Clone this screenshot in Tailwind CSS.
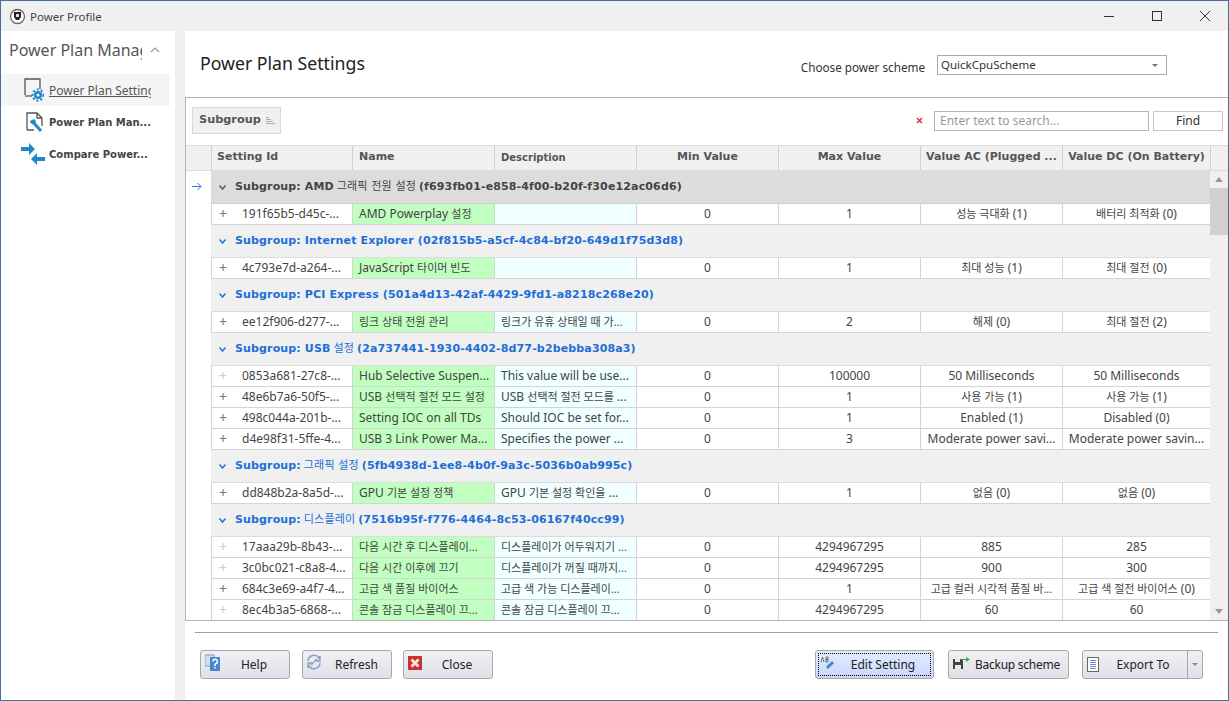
<!DOCTYPE html>
<html lang="ko">
<head>
<meta charset="utf-8">
<script src="https://cdn.jsdelivr.net/npm/@tailwindcss/browser@4"></script>
<title>Power Profile</title>
</head>
<body class="overflow-hidden">
<div class="w-[1229px] h-[701px] border border-[#4a6c9c] bg-[#f0f0f0] flex flex-col overflow-hidden text-[12px] text-[#333] font-['Noto_Sans','Noto_Sans_CJK_KR',sans-serif]">
  <!-- Title bar -->
  <div class="h-[30px] shrink-0 flex items-center pl-[8px]">
    <svg class="w-[17px] h-[17px]" viewBox="0 0 17 17"><circle cx="8.500" cy="8.500" r="7" fill="#fff" stroke="#666" stroke-width="1.300"/><path d="M5 4h7v5l-2 3H7L5 9z" fill="#222"/><rect x="7" y="6" width="3" height="3" fill="#ddd"/></svg>
    <span class="ml-[4px] text-[11.5px] mt-[1px] text-[#444]">Power Profile</span>
    <div class="ml-auto flex items-center gap-[2px]">
      <svg class="w-[46px] h-[16px]" viewBox="0 0 46 16"><path d="M18 8.500h10" stroke="#333"/></svg>
      <svg class="w-[46px] h-[16px]" viewBox="0 0 46 16"><rect x="18.500" y="3.500" width="9" height="9" fill="none" stroke="#333"/></svg>
      <svg class="w-[46px] h-[16px]" viewBox="0 0 46 16"><path d="M18 3l10 10M28 3L18 13" stroke="#333"/></svg>
    </div>
  </div>
  <div class="flex-1 flex min-h-0">
    <!-- Sidebar -->
    <aside class="w-[174px] shrink-0 bg-white pt-[6px]">
      <div class="h-[26px] flex items-center pl-[8px]">
        <span class="w-[133px] overflow-hidden whitespace-nowrap text-[16px] text-[#555]">Power Plan Manager</span>
        <svg class="ml-[8px] w-[10px] h-[6px]" viewBox="0 0 10 6"><path d="M1 5l4-4 4 4" fill="none" stroke="#999" stroke-width="1.200"/></svg>
      </div>
      <div class="mt-[11px] w-[169px] h-[32px] bg-[#f5f5f5] flex items-center pl-[23px]">
        <svg class="w-[20px] h-[24px] shrink-0" viewBox="0 0 20 24"><path d="M1 17V1h15v10" fill="none" stroke="#555" stroke-width="1.300"/><path d="M1 18h7" stroke="#555" stroke-width="1.300"/><circle cx="14" cy="17" r="4" fill="#1e88c8"/><circle cx="14" cy="17" r="5.500" fill="none" stroke="#1e88c8" stroke-width="2" stroke-dasharray="2 2"/><circle cx="14" cy="17" r="1.500" fill="#fff"/></svg>
        <span class="ml-[5px] mt-[2px] w-[102px] overflow-hidden whitespace-nowrap underline text-[#555]">Power Plan Settings</span>
      </div>
      <div class="h-[32px] flex items-center pl-[25px]">
        <svg class="w-[18px] h-[21px] shrink-0" viewBox="0 0 18 21"><path d="M1 18V1h10l5 5v8M11 1v5h5M1 18h7" fill="none" stroke="#555" stroke-width="1.300"/><path d="M7 10l8 9" stroke="#1e88c8" stroke-width="3"/><path d="M4 9a3.500 3.500 0 0 0 5 3l1-3-2-2z" fill="#1e88c8"/></svg>
        <span class="ml-[5px] font-bold text-[10px] font-['DejaVu_Sans',sans-serif] text-[#444] whitespace-nowrap">Power Plan Man...</span>
      </div>
      <div class="h-[32px] flex items-center pl-[20px]">
        <svg class="w-[24px] h-[22px] shrink-0" viewBox="0 0 24 22"><path d="M0 4h8V0l6 6-6 6V8H0z" fill="#1e88c8"/><path d="M24 14h-8v-4l-6 6 6 6v-4h8z" fill="#1e88c8"/></svg>
        <span class="ml-[4px] font-bold text-[10px] font-['DejaVu_Sans',sans-serif] text-[#444] whitespace-nowrap">Compare Power...</span>
      </div>
    </aside>
    <div class="w-[10px] shrink-0"></div>
    <!-- Main -->
    <main class="flex-1 min-w-0 bg-white flex flex-col">
      <div class="h-[66px] shrink-0 relative flex items-start pl-[15px] pr-[61px]">
        <h1 class="mt-[19px] text-[17.700px] leading-[26px] text-[#222]">Power Plan Settings</h1>
        <span class="ml-auto mt-[28px] leading-[16px] text-[11.700px] text-[#333]">Choose power scheme</span>
        <div class="ml-[12px] mt-[24px] w-[230px] h-[20px] border border-[#aaa] flex items-center pl-[3px] pr-[8px] text-[11.500px] text-[#333]">
          QuickCpuScheme
          <span class="ml-auto w-0 h-0 border-x-[3px] border-x-transparent border-t-[3px] border-t-[#777]"></span>
        </div>
      </div>
      <!-- Grid panel -->
      <section class="h-[524px] shrink-0 border-t border-l border-b border-[#b4b4b4] flex flex-col overflow-hidden">
        <div class="h-[47px] shrink-0 flex items-center pl-[6px] pr-[5px] pb-[2px]">
          <div class="h-[27px] w-[89px] border border-[#d8d8d8] bg-[#f0f0f0] flex items-center pl-[6px] font-bold text-[11.300px] font-['DejaVu_Sans',sans-serif] text-[#555]">Subgroup
            <svg class="ml-[5px] w-[9px] h-[7px]" viewBox="0 0 9 7"><path d="M0 .5h3M0 2.500h5M0 4.500h7M0 6.500h9" stroke="#aaa"/></svg>
          </div>
          <svg class="ml-auto w-[7px] h-[7px]" viewBox="0 0 7 7"><path d="M1 1l5 5M6 1L1 6" stroke="#e0364a" stroke-width="1.600"/></svg>
          <div class="ml-[11px] w-[215px] h-[20px] border border-[#b4b4b4] flex items-center pl-[5px] text-[#999]">Enter text to search...</div>
          <div class="ml-[4px] w-[70px] h-[20px] border border-[#c8c8c8] flex items-center justify-center text-[#333]">Find</div>
        </div>
        <!-- Header -->
        <div class="h-[26px] shrink-0 grid grid-cols-[25px_141px_142px_142px_142px_142px_142px_148px_1fr] bg-[#f0f0f0] border-y border-[#dcdcdc] font-bold text-[11px] font-['DejaVu_Sans',sans-serif] text-[#555] items-stretch">
          <div></div>
          <div class="border-l border-[#d0d0d0] pl-[5px] pb-[2px] flex items-center whitespace-nowrap">Setting Id</div>
          <div class="border-l border-[#d0d0d0] pl-[6px] pb-[2px] flex items-center whitespace-nowrap">Name</div>
          <div class="border-l border-[#d0d0d0] pl-[6px] pb-[2px] flex items-center whitespace-nowrap text-[10px]">Description</div>
          <div class="border-l border-[#d0d0d0] pb-[2px] flex items-center justify-center whitespace-nowrap">Min Value</div>
          <div class="border-l border-[#d0d0d0] pb-[2px] flex items-center justify-center whitespace-nowrap">Max Value</div>
          <div class="border-l border-[#d0d0d0] pb-[2px] flex items-center justify-center whitespace-nowrap">Value AC (Plugged ...</div>
          <div class="border-l border-[#d0d0d0] pb-[2px] flex items-center justify-center whitespace-nowrap">Value DC (On Battery)</div>
          <div class="border-l border-[#d0d0d0]"></div>
        </div>
        <!-- Body -->
        <div class="flex-1 min-h-0 flex">
          <div class="w-[25px] shrink-0 h-full pt-[11px] pl-[6px]">
            <svg class="w-[10px] h-[9px]" viewBox="0 0 10 9"><path d="M0 4.500h9M5.500 1l3.500 3.500L5.500 8" fill="none" stroke="#2d7ad6"/></svg>
          </div>
          <div class="w-[999px] shrink-0 overflow-hidden leading-[20px] text-[#444]">
            <div class="h-[33px] bg-[#dcdcdc] border-b border-[#cfcfcf] flex items-center pl-[8px] font-bold text-[11px] tracking-[0.14px] font-['DejaVu_Sans','Noto_Sans_CJK_KR',sans-serif] text-[#444] whitespace-nowrap"><svg class="w-[7px] h-[5px] mr-[9px]" viewBox="0 0 7 5"><path d="M.5.5L3.500 4 6.500.5" fill="none" stroke="#555" stroke-width="1.500"/></svg>Subgroup: AMD <span class="font-normal mx-[3px]">그래픽 전원 설정</span> (f693fb01-e858-4f00-b20f-f30e12ac06d6)</div>
            <div class="h-[21px] grid grid-cols-[141px_142px_142px_142px_142px_142px_148px] border-b border-[#d4d4d4]">
              <div class="flex whitespace-nowrap border-l border-[#d4d4d4]"><span class="w-[30px] pl-[7px] text-[#777] text-[14px] leading-[19px]">+</span>191f65b5-d45c-...</div>
              <div class="bg-[#c0ffc0] pl-[6px] whitespace-nowrap border-l border-[#d4d4d4]">AMD Powerplay <span class="text-[11px]">설정</span></div>
              <div class="bg-[#f0ffff] border-l border-[#d4d4d4]"></div>
              <div class="text-center border-l border-[#d4d4d4]">0</div>
              <div class="text-center border-l border-[#d4d4d4]">1</div>
              <div class="text-center border-l border-[#d4d4d4]"><span class="text-[11px]">성능 극대화</span> (1)</div>
              <div class="text-center border-l border-[#d4d4d4]"><span class="text-[11px]">배터리 최적화</span> (0)</div>
            </div>
            <div class="h-[33px] bg-[#f0f0f0] border-b border-[#dcdcdc] flex items-center pl-[8px] font-bold text-[11px] tracking-[0.14px] font-['DejaVu_Sans','Noto_Sans_CJK_KR',sans-serif] text-[#1c6fd6] whitespace-nowrap"><svg class="w-[7px] h-[5px] mr-[9px]" viewBox="0 0 7 5"><path d="M.5.5L3.500 4 6.500.5" fill="none" stroke="#1c6fd6" stroke-width="1.500"/></svg>Subgroup: Internet Explorer (02f815b5-a5cf-4c84-bf20-649d1f75d3d8)</div>
            <div class="h-[21px] grid grid-cols-[141px_142px_142px_142px_142px_142px_148px] border-b border-[#d4d4d4]">
              <div class="flex whitespace-nowrap border-l border-[#d4d4d4]"><span class="w-[30px] pl-[7px] text-[#777] text-[14px] leading-[19px]">+</span>4c793e7d-a264-...</div>
              <div class="bg-[#c0ffc0] pl-[6px] whitespace-nowrap border-l border-[#d4d4d4]">JavaScript <span class="text-[11px]">타이머 빈도</span></div>
              <div class="bg-[#f0ffff] border-l border-[#d4d4d4]"></div>
              <div class="text-center border-l border-[#d4d4d4]">0</div>
              <div class="text-center border-l border-[#d4d4d4]">1</div>
              <div class="text-center border-l border-[#d4d4d4]"><span class="text-[11px]">최대 성능</span> (1)</div>
              <div class="text-center border-l border-[#d4d4d4]"><span class="text-[11px]">최대 절전</span> (0)</div>
            </div>
            <div class="h-[33px] bg-[#f0f0f0] border-b border-[#dcdcdc] flex items-center pl-[8px] font-bold text-[11px] tracking-[0.14px] font-['DejaVu_Sans','Noto_Sans_CJK_KR',sans-serif] text-[#1c6fd6] whitespace-nowrap"><svg class="w-[7px] h-[5px] mr-[9px]" viewBox="0 0 7 5"><path d="M.5.5L3.500 4 6.500.5" fill="none" stroke="#1c6fd6" stroke-width="1.500"/></svg>Subgroup: PCI Express (501a4d13-42af-4429-9fd1-a8218c268e20)</div>
            <div class="h-[21px] grid grid-cols-[141px_142px_142px_142px_142px_142px_148px] border-b border-[#d4d4d4]">
              <div class="flex whitespace-nowrap border-l border-[#d4d4d4]"><span class="w-[30px] pl-[7px] text-[#777] text-[14px] leading-[19px]">+</span>ee12f906-d277-...</div>
              <div class="bg-[#c0ffc0] pl-[6px] whitespace-nowrap border-l border-[#d4d4d4] text-[11px]">링크 상태 전원 관리</div>
              <div class="bg-[#f0ffff] pl-[6px] whitespace-nowrap border-l border-[#d4d4d4] text-[11px]">링크가 유휴 상태일 때 가...</div>
              <div class="text-center border-l border-[#d4d4d4]">0</div>
              <div class="text-center border-l border-[#d4d4d4]">2</div>
              <div class="text-center border-l border-[#d4d4d4]"><span class="text-[11px]">해제</span> (0)</div>
              <div class="text-center border-l border-[#d4d4d4]"><span class="text-[11px]">최대 절전</span> (2)</div>
            </div>
            <div class="h-[33px] bg-[#f0f0f0] border-b border-[#dcdcdc] flex items-center pl-[8px] font-bold text-[11px] tracking-[0.14px] font-['DejaVu_Sans','Noto_Sans_CJK_KR',sans-serif] text-[#1c6fd6] whitespace-nowrap"><svg class="w-[7px] h-[5px] mr-[9px]" viewBox="0 0 7 5"><path d="M.5.5L3.500 4 6.500.5" fill="none" stroke="#1c6fd6" stroke-width="1.500"/></svg>Subgroup: USB <span class="font-normal mx-[3px]">설정</span> (2a737441-1930-4402-8d77-b2bebba308a3)</div>
            <div class="h-[21px] grid grid-cols-[141px_142px_142px_142px_142px_142px_148px] border-b border-[#d4d4d4]">
              <div class="flex whitespace-nowrap border-l border-[#d4d4d4]"><span class="w-[30px] pl-[7px] text-[#ccc] text-[14px] leading-[19px]">+</span>0853a681-27c8-...</div>
              <div class="bg-[#c0ffc0] pl-[6px] whitespace-nowrap border-l border-[#d4d4d4]">Hub Selective Suspen...</div>
              <div class="bg-[#f0ffff] pl-[6px] whitespace-nowrap border-l border-[#d4d4d4]">This value will be use...</div>
              <div class="text-center border-l border-[#d4d4d4]">0</div>
              <div class="text-center border-l border-[#d4d4d4]">100000</div>
              <div class="text-center border-l border-[#d4d4d4]">50 Milliseconds</div>
              <div class="text-center border-l border-[#d4d4d4]">50 Milliseconds</div>
            </div>
            <div class="h-[21px] grid grid-cols-[141px_142px_142px_142px_142px_142px_148px] border-b border-[#d4d4d4]">
              <div class="flex whitespace-nowrap border-l border-[#d4d4d4]"><span class="w-[30px] pl-[7px] text-[#777] text-[14px] leading-[19px]">+</span>48e6b7a6-50f5-...</div>
              <div class="bg-[#c0ffc0] pl-[6px] whitespace-nowrap border-l border-[#d4d4d4]">USB <span class="text-[11px]">선택적 절전 모드 설정</span></div>
              <div class="bg-[#f0ffff] pl-[6px] whitespace-nowrap border-l border-[#d4d4d4]">USB <span class="text-[11px]">선택적 절전 모드를</span> ...</div>
              <div class="text-center border-l border-[#d4d4d4]">0</div>
              <div class="text-center border-l border-[#d4d4d4]">1</div>
              <div class="text-center border-l border-[#d4d4d4]"><span class="text-[11px]">사용 가능</span> (1)</div>
              <div class="text-center border-l border-[#d4d4d4]"><span class="text-[11px]">사용 가능</span> (1)</div>
            </div>
            <div class="h-[21px] grid grid-cols-[141px_142px_142px_142px_142px_142px_148px] border-b border-[#d4d4d4]">
              <div class="flex whitespace-nowrap border-l border-[#d4d4d4]"><span class="w-[30px] pl-[7px] text-[#777] text-[14px] leading-[19px]">+</span>498c044a-201b-...</div>
              <div class="bg-[#c0ffc0] pl-[6px] whitespace-nowrap border-l border-[#d4d4d4]">Setting IOC on all TDs</div>
              <div class="bg-[#f0ffff] pl-[6px] whitespace-nowrap border-l border-[#d4d4d4]">Should IOC be set for...</div>
              <div class="text-center border-l border-[#d4d4d4]">0</div>
              <div class="text-center border-l border-[#d4d4d4]">1</div>
              <div class="text-center border-l border-[#d4d4d4]">Enabled (1)</div>
              <div class="text-center border-l border-[#d4d4d4]">Disabled (0)</div>
            </div>
            <div class="h-[21px] grid grid-cols-[141px_142px_142px_142px_142px_142px_148px] border-b border-[#d4d4d4]">
              <div class="flex whitespace-nowrap border-l border-[#d4d4d4]"><span class="w-[30px] pl-[7px] text-[#777] text-[14px] leading-[19px]">+</span>d4e98f31-5ffe-4...</div>
              <div class="bg-[#c0ffc0] pl-[6px] whitespace-nowrap border-l border-[#d4d4d4]">USB 3 Link Power Ma...</div>
              <div class="bg-[#f0ffff] pl-[6px] whitespace-nowrap border-l border-[#d4d4d4]">Specifies the power ...</div>
              <div class="text-center border-l border-[#d4d4d4]">0</div>
              <div class="text-center border-l border-[#d4d4d4]">3</div>
              <div class="text-center border-l border-[#d4d4d4]">Moderate power savi...</div>
              <div class="text-center border-l border-[#d4d4d4]">Moderate power savin...</div>
            </div>
            <div class="h-[33px] bg-[#f0f0f0] border-b border-[#dcdcdc] flex items-center pl-[8px] font-bold text-[11px] tracking-[0.14px] font-['DejaVu_Sans','Noto_Sans_CJK_KR',sans-serif] text-[#1c6fd6] whitespace-nowrap"><svg class="w-[7px] h-[5px] mr-[9px]" viewBox="0 0 7 5"><path d="M.5.5L3.500 4 6.500.5" fill="none" stroke="#1c6fd6" stroke-width="1.500"/></svg>Subgroup: <span class="font-normal mx-[3px]">그래픽 설정</span> (5fb4938d-1ee8-4b0f-9a3c-5036b0ab995c)</div>
            <div class="h-[21px] grid grid-cols-[141px_142px_142px_142px_142px_142px_148px] border-b border-[#d4d4d4]">
              <div class="flex whitespace-nowrap border-l border-[#d4d4d4]"><span class="w-[30px] pl-[7px] text-[#777] text-[14px] leading-[19px]">+</span>dd848b2a-8a5d-...</div>
              <div class="bg-[#c0ffc0] pl-[6px] whitespace-nowrap border-l border-[#d4d4d4]">GPU <span class="text-[11px]">기본 설정 정책</span></div>
              <div class="bg-[#f0ffff] pl-[6px] whitespace-nowrap border-l border-[#d4d4d4]">GPU <span class="text-[11px]">기본 설정 확인을</span> ...</div>
              <div class="text-center border-l border-[#d4d4d4]">0</div>
              <div class="text-center border-l border-[#d4d4d4]">1</div>
              <div class="text-center border-l border-[#d4d4d4]"><span class="text-[11px]">없음</span> (0)</div>
              <div class="text-center border-l border-[#d4d4d4]"><span class="text-[11px]">없음</span> (0)</div>
            </div>
            <div class="h-[33px] bg-[#f0f0f0] border-b border-[#dcdcdc] flex items-center pl-[8px] font-bold text-[11px] tracking-[0.14px] font-['DejaVu_Sans','Noto_Sans_CJK_KR',sans-serif] text-[#1c6fd6] whitespace-nowrap"><svg class="w-[7px] h-[5px] mr-[9px]" viewBox="0 0 7 5"><path d="M.5.5L3.500 4 6.500.5" fill="none" stroke="#1c6fd6" stroke-width="1.500"/></svg>Subgroup: <span class="font-normal mx-[3px]">디스플레이</span> (7516b95f-f776-4464-8c53-06167f40cc99)</div>
            <div class="h-[21px] grid grid-cols-[141px_142px_142px_142px_142px_142px_148px] border-b border-[#d4d4d4]">
              <div class="flex whitespace-nowrap border-l border-[#d4d4d4]"><span class="w-[30px] pl-[7px] text-[#ccc] text-[14px] leading-[19px]">+</span>17aaa29b-8b43-...</div>
              <div class="bg-[#c0ffc0] pl-[6px] whitespace-nowrap border-l border-[#d4d4d4] text-[11px]">다음 시간 후 디스플레이...</div>
              <div class="bg-[#f0ffff] pl-[6px] whitespace-nowrap border-l border-[#d4d4d4] text-[11px]">디스플레이가 어두워지기 ...</div>
              <div class="text-center border-l border-[#d4d4d4]">0</div>
              <div class="text-center border-l border-[#d4d4d4]">4294967295</div>
              <div class="text-center border-l border-[#d4d4d4]">885</div>
              <div class="text-center border-l border-[#d4d4d4]">285</div>
            </div>
            <div class="h-[21px] grid grid-cols-[141px_142px_142px_142px_142px_142px_148px] border-b border-[#d4d4d4]">
              <div class="flex whitespace-nowrap border-l border-[#d4d4d4]"><span class="w-[30px] pl-[7px] text-[#ccc] text-[14px] leading-[19px]">+</span>3c0bc021-c8a8-4...</div>
              <div class="bg-[#c0ffc0] pl-[6px] whitespace-nowrap border-l border-[#d4d4d4] text-[11px]">다음 시간 이후에 끄기</div>
              <div class="bg-[#f0ffff] pl-[6px] whitespace-nowrap border-l border-[#d4d4d4] text-[11px]">디스플레이가 꺼질 때까지...</div>
              <div class="text-center border-l border-[#d4d4d4]">0</div>
              <div class="text-center border-l border-[#d4d4d4]">4294967295</div>
              <div class="text-center border-l border-[#d4d4d4]">900</div>
              <div class="text-center border-l border-[#d4d4d4]">300</div>
            </div>
            <div class="h-[21px] grid grid-cols-[141px_142px_142px_142px_142px_142px_148px] border-b border-[#d4d4d4]">
              <div class="flex whitespace-nowrap border-l border-[#d4d4d4]"><span class="w-[30px] pl-[7px] text-[#777] text-[14px] leading-[19px]">+</span>684c3e69-a4f7-4...</div>
              <div class="bg-[#c0ffc0] pl-[6px] whitespace-nowrap border-l border-[#d4d4d4] text-[11px]">고급 색 품질 바이어스</div>
              <div class="bg-[#f0ffff] pl-[6px] whitespace-nowrap border-l border-[#d4d4d4] text-[11px]">고급 색 가능 디스플레이...</div>
              <div class="text-center border-l border-[#d4d4d4]">0</div>
              <div class="text-center border-l border-[#d4d4d4]">1</div>
              <div class="text-center border-l border-[#d4d4d4] text-[11px] whitespace-nowrap">고급 컬러 시각적 품질 바...</div>
              <div class="text-center border-l border-[#d4d4d4] whitespace-nowrap"><span class="text-[11px]">고급 색 절전 바이어스</span> (0)</div>
            </div>
            <div class="h-[21px] grid grid-cols-[141px_142px_142px_142px_142px_142px_148px] border-b border-[#d4d4d4]">
              <div class="flex whitespace-nowrap border-l border-[#d4d4d4]"><span class="w-[30px] pl-[7px] text-[#ccc] text-[14px] leading-[19px]">+</span>8ec4b3a5-6868-...</div>
              <div class="bg-[#c0ffc0] pl-[6px] whitespace-nowrap border-l border-[#d4d4d4] text-[11px]">콘솔 잠금 디스플레이 끄...</div>
              <div class="bg-[#f0ffff] pl-[6px] whitespace-nowrap border-l border-[#d4d4d4] text-[11px]">콘솔 잠금 디스플레이 끄...</div>
              <div class="text-center border-l border-[#d4d4d4]">0</div>
              <div class="text-center border-l border-[#d4d4d4]">4294967295</div>
              <div class="text-center border-l border-[#d4d4d4]">60</div>
              <div class="text-center border-l border-[#d4d4d4]">60</div>
            </div>
          </div>
          <!-- scrollbar -->
          <div class="w-[18px] shrink-0 bg-[#f0f0f0] flex flex-col items-center relative">
            <div class="h-[17px] flex items-center"><span class="w-0 h-0 border-x-[4px] border-x-transparent border-b-[5px] border-b-[#999]"></span></div>
            <div class="w-full h-[47px] bg-[#d0d0d0]"></div>
            <div class="mt-auto h-[17px] flex items-center"><span class="w-0 h-0 border-x-[4px] border-x-transparent border-t-[5px] border-t-[#999]"></span></div>
          </div>
        </div>
      </section>
      <!-- Footer -->
      <div class="flex-1 px-[10px]">
        <div class="mt-[11px] h-px bg-[#8fa3b8]"></div>
        <div class="mt-[17px] pl-[5px] pr-[15px] flex items-center text-[#222]">
          <div class="w-[90px] h-[29px] rounded-[3px] border border-[#a8a8a8] bg-gradient-to-b from-[#f0f0f4] to-[#dfe0e8] flex items-center justify-center relative">
            <svg class="absolute left-[4px] top-[3px] w-[15px] h-[17px]" viewBox="0 0 15 17"><rect x="0" y="1" width="9" height="11" fill="#cfe0f2" stroke="#7a9cc6"/><rect x="5" y="3" width="10" height="14" fill="#4a86d0"/><path d="M8 7.500a2.200 2.200 0 1 1 3 2l-1 1v1.500" fill="none" stroke="#fff" stroke-width="1.500"/><rect x="9.300" y="13" width="1.500" height="1.500" fill="#fff"/></svg>
            <span class="pl-[18px]">Help</span>
          </div>
          <div class="ml-[12px] w-[90px] h-[29px] rounded-[3px] border border-[#a8a8a8] bg-gradient-to-b from-[#f0f0f4] to-[#dfe0e8] flex items-center justify-center relative">
            <svg class="absolute left-[3px] top-[3px] w-[16px] h-[16px]" viewBox="0 0 16 16"><path d="M2 7a6 6 0 0 1 11-3l1-2v5h-5l2-2" fill="none" stroke="#8c9fc4" stroke-width="1.500"/><path d="M14 9a6 6 0 0 1-11 3l-1 2V9h5l-2 2" fill="none" stroke="#8c9fc4" stroke-width="1.500"/></svg>
            <span class="pl-[19px]">Refresh</span>
          </div>
          <div class="ml-[11px] w-[90px] h-[29px] rounded-[3px] border border-[#a8a8a8] bg-gradient-to-b from-[#f0f0f4] to-[#dfe0e8] flex items-center justify-center relative">
            <svg class="absolute left-[4px] top-[5px] w-[14px] h-[14px]" viewBox="0 0 14 14"><rect width="14" height="14" fill="#c8342c"/><path d="M3.500 3.500l7 7M10.500 3.500l-7 7" stroke="#fbe3e0" stroke-width="2.800"/></svg>
            <span class="pl-[18px]">Close</span>
          </div>
          <div class="ml-auto w-[119px] h-[29px] rounded-[3px] border border-[#a8a8a8] bg-gradient-to-b from-[#e4ecff] to-[#c8d8fa] flex items-center justify-center relative">
            <div class="absolute inset-[2px] border border-dotted border-black"></div>
            <svg class="absolute left-[4px] top-[4px] w-[16px] h-[16px]" viewBox="0 0 16 16"><path d="M7 13l6-6" stroke="#4a86d0" stroke-width="3"/><path d="M1 7l1.500-5L4 7M6 2v5h2V4.500H6h2V2z" fill="none" stroke="#555" stroke-width=".8"/></svg>
            <span class="pl-[17px]">Edit Setting</span>
          </div>
          <div class="ml-[14px] w-[121px] h-[29px] rounded-[3px] border border-[#a8a8a8] bg-gradient-to-b from-[#f0f0f4] to-[#dfe0e8] flex items-center relative pl-[26px]">
            <svg class="absolute left-[3px] top-[5px] w-[18px] h-[14px]" viewBox="0 0 18 14"><path d="M1 3h10v10H1z" fill="#444"/><rect x="3" y="3" width="5" height="3" fill="#e8e8e8"/><rect x="3" y="9" width="6" height="4" fill="#e8e8e8"/><path d="M9 3h5V1l4 2.500L14 6V4H9z" fill="#2fa84f"/></svg>
            <span class="tracking-[-0.25px]">Backup scheme</span>
          </div>
          <div class="ml-[13px] w-[121px] h-[29px] rounded-[3px] border border-[#a8a8a8] bg-gradient-to-b from-[#f0f0f4] to-[#dfe0e8] flex items-stretch relative">
            <svg class="absolute left-[4px] top-[6px] w-[12px] h-[15px]" viewBox="0 0 12 15"><rect x=".5" y=".5" width="11" height="14" fill="#fff" stroke="#666"/><path d="M3 3.500h6M3 5.500h6M3 7.500h6M3 9.500h6M3 11.500h6" stroke="#6a8fd0"/></svg>
            <span class="w-[104px] flex items-center justify-center pl-[16px]">Export To</span>
            <div class="flex-1 border-l border-[#a8a8a8] flex items-center justify-center"><span class="w-0 h-0 border-x-[3px] border-x-transparent border-t-[3px] border-t-[#888]"></span></div>
          </div>
        </div>
      </div>
    </main>
  </div>
</div>
</body>
</html>
